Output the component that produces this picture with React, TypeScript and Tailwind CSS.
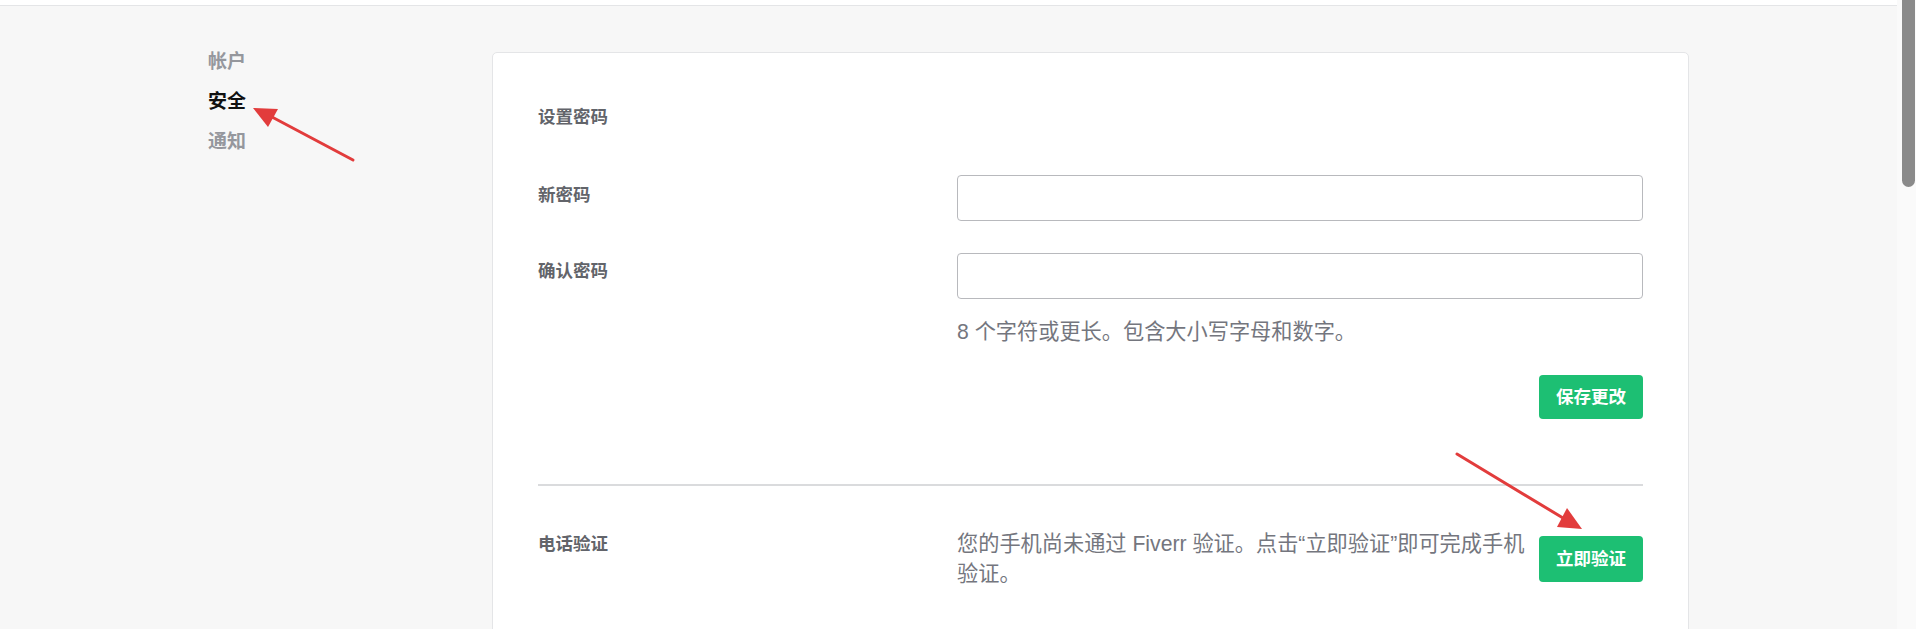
import React from "react";

const FONT = '"Liberation Sans","Noto Sans CJK SC",sans-serif';

function Label({ children, className = "" }: { children: React.ReactNode; className?: string }) {
  return (
    <div className={`w-[419px] shrink-0 text-[17.5px] leading-[30px] font-bold text-[#62646a] ${className}`}>
      {children}
    </div>
  );
}

export default function App() {
  return (
    <div className="relative flex h-[629px] w-full overflow-hidden bg-[#f7f7f7]" style={{ fontFamily: FONT }}>
      <div className="flex min-w-0 flex-1 flex-col">
        <div className="h-[6px] shrink-0 border-b border-[#e4e5e7] bg-white" />
        <div className="mx-auto flex w-[1481px] pt-[36px]">
          <nav className="w-[284px] shrink-0 text-[19px] font-bold leading-[40px]">
            <div className="text-[#95979d]">帐户</div>
            <div className="text-[#111111]">安全</div>
            <div className="text-[#95979d]">通知</div>
          </nav>
          <main className="mt-[10px] h-[700px] w-[1197px] shrink-0 rounded-[5px] border border-[#e4e5e7] bg-white px-[45px] pt-[49px]">
            <div className="text-[17.5px] font-bold leading-[30px] text-[#62646a]">设置密码</div>

            <div className="mt-[43px] flex">
              <Label className="mt-[5px]">新密码</Label>
              <div className="flex-1">
                <input type="password" className="block h-[46px] w-full rounded-[4px] border border-[#b8b9bd] bg-white px-3 outline-none" />
              </div>
            </div>

            <div className="mt-[32px] flex">
              <Label className="mt-[3px]">确认密码</Label>
              <div className="flex-1">
                <input type="password" className="block h-[46px] w-full rounded-[4px] border border-[#b8b9bd] bg-white px-3 outline-none" />
                <p className="mt-[18px] text-[21.2px] leading-[30px] text-[#74767e]">8 个字符或更长。包含大小写字母和数字。</p>
                <div className="mt-[28px] flex justify-end">
                  <button className="h-[44px] rounded-[4px] bg-[#1dbf73] px-[17px] text-[17.5px] font-bold text-white">保存更改</button>
                </div>
              </div>
            </div>

            <div className="mt-[65px] h-[2px] bg-[#dadbdd]" />

            <div className="mt-[43px] flex">
              <Label>电话验证</Label>
              <div className="flex flex-1 items-center justify-between gap-[6px]">
                <p className="whitespace-nowrap text-[21.2px] leading-[30px] text-[#74767e]">
                  您的手机尚未通过 Fiverr 验证。点击“立即验证”即可完成手机
                  <br />
                  验证。
                </p>
                <button className="h-[46px] shrink-0 rounded-[4px] bg-[#1dbf73] px-[17px] text-[17.5px] font-bold text-white">立即验证</button>
              </div>
            </div>
          </main>
        </div>
      </div>

      <div className="relative w-[19px] shrink-0 bg-[#fafafa]">
        <div className="ml-[5px] h-[187px] w-[13px] rounded-b-full bg-[#8a8a8a]" />
      </div>

      <svg className="pointer-events-none absolute left-0 top-0" width="1916" height="629" viewBox="0 0 1916 629">
        <line x1="353" y1="160" x2="272" y2="117" stroke="#e23c3c" strokeWidth="3" strokeLinecap="round" />
        <polygon points="253,108 278,109 268,127" fill="#e23c3c" />
        <line x1="1457" y1="454" x2="1563" y2="518" stroke="#e23c3c" strokeWidth="3" strokeLinecap="round" />
        <polygon points="1582,529 1567,508 1557,527" fill="#e23c3c" />
      </svg>
    </div>
  );
}
